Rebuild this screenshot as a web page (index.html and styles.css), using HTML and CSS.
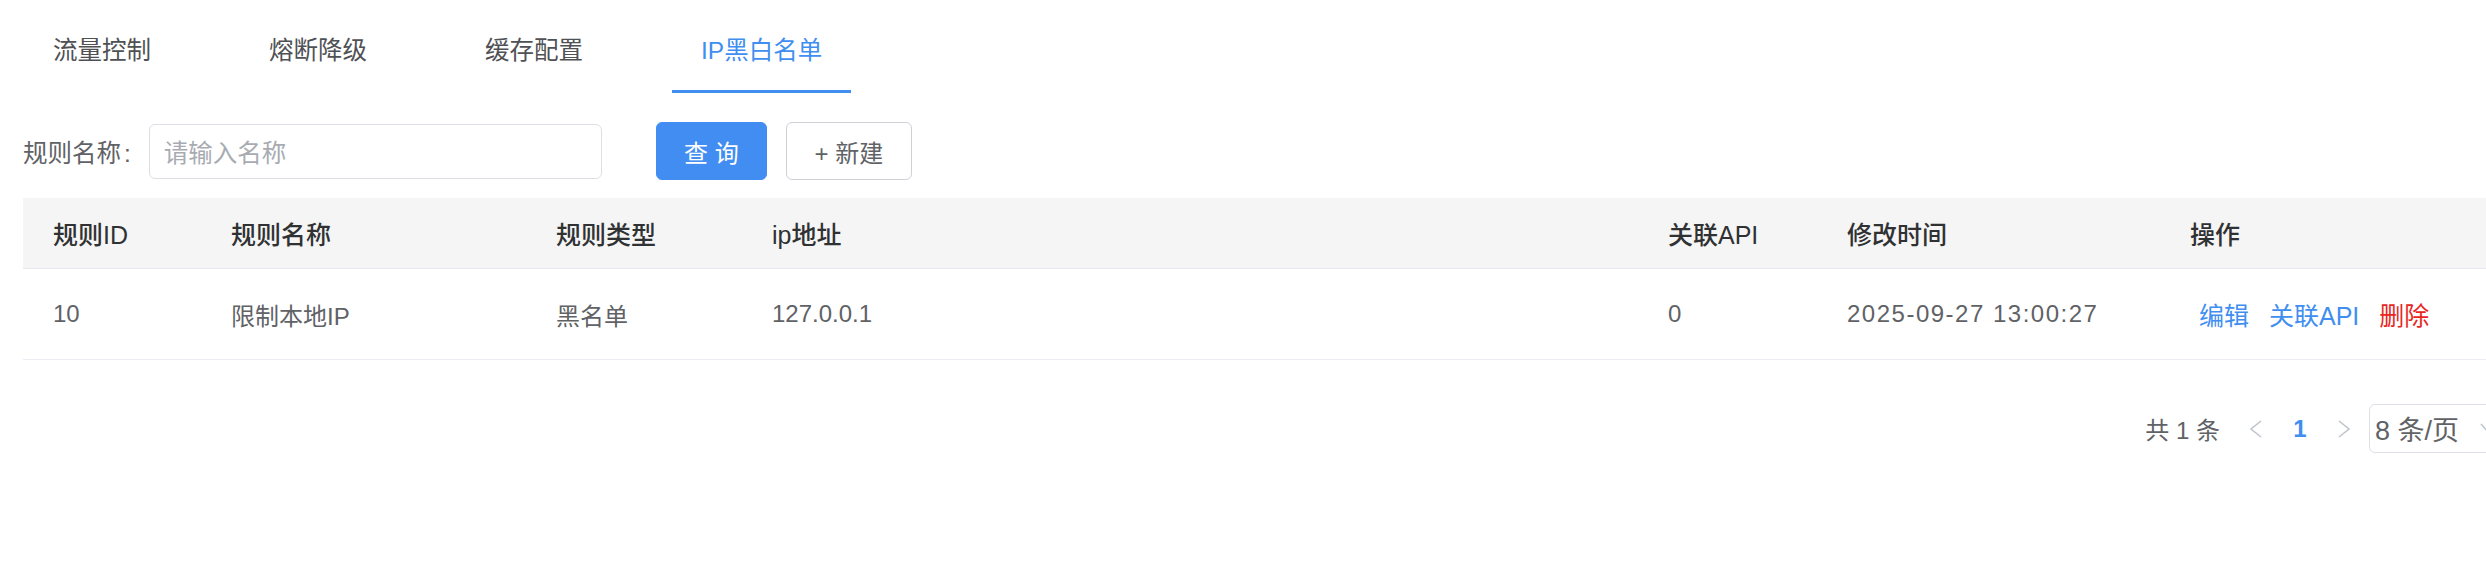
FILE: index.html
```html
<!DOCTYPE html>
<html lang="zh-CN">
<head>
<meta charset="utf-8">
<title>IP黑白名单</title>
<link rel="stylesheet" href="styles.css">
</head>
<body>
<div class="page">
  <nav class="tabs">
    <div class="tab">流量控制</div>
    <div class="tab">熔断降级</div>
    <div class="tab">缓存配置</div>
    <div class="tab active">IP黑白名单</div>
  </nav>

  <div class="search">
    <label class="search-label">规则名称<span class="colon">:</span></label>
    <div class="input"><span class="placeholder">请输入名称</span></div>
    <button class="btn btn-primary">查 询</button>
    <button class="btn btn-default">+ 新建</button>
  </div>

  <table class="grid">
    <colgroup>
      <col class="c1"><col class="c2"><col class="c3"><col class="c4"><col class="c5"><col class="c6"><col class="c7">
    </colgroup>
    <thead>
      <tr>
        <th>规则ID</th>
        <th>规则名称</th>
        <th>规则类型</th>
        <th>ip地址</th>
        <th>关联API</th>
        <th>修改时间</th>
        <th>操作</th>
      </tr>
    </thead>
    <tbody>
      <tr>
        <td>10</td>
        <td>限制本地IP</td>
        <td>黑名单</td>
        <td>127.0.0.1</td>
        <td>0</td>
        <td class="date">2025-09-27 13:00:27</td>
        <td class="ops"><a class="link">编辑</a><a class="link">关联API</a><a class="link danger">删除</a></td>
      </tr>
    </tbody>
  </table>

  <div class="pager">
    <span class="total">共 1 条</span>
    <span class="pg-btn disabled"><svg width="14" height="20" viewBox="0 0 14 20"><polyline points="12,2 2,10 12,18" fill="none" stroke="#c0c4cc" stroke-width="1.6"/></svg></span>
    <span class="pg-btn current">1</span>
    <span class="pg-btn disabled"><svg width="14" height="20" viewBox="0 0 14 20"><polyline points="2,2 12,10 2,18" fill="none" stroke="#c0c4cc" stroke-width="1.6"/></svg></span>
    <div class="size-select"><span>8 条/页</span><svg class="arrow" width="20" height="14" viewBox="0 0 20 14"><polyline points="2,2 10,11 18,2" fill="none" stroke="#c0c4cc" stroke-width="1.6"/></svg></div>
  </div>
</div>
</body>
</html>
```

FILE: styles.css
```css
html, body {
  margin: 0;
  padding: 0;
  background: #ffffff;
  overflow: hidden;
}

body {
  font-family: "Liberation Sans", "Noto Sans CJK SC", sans-serif;
  font-size: 24px;
  color: #606266;
}

.page {
  width: 2500px;
  margin-left: 23px;
}

.tabs {
  display: flex;
  gap: 60px;
  padding-left: 1px;
}

.tab {
  box-sizing: border-box;
  height: 93px;
  padding: 12px 29px 0;
  line-height: 78px;
  font-size: 24.5px;
  color: #4f5155;
  border-bottom: 3px solid transparent;
  white-space: nowrap;
}

.tab.active {
  color: #3f8ef0;
  border-bottom-color: #3f8ef0;
}

.search {
  display: flex;
  align-items: center;
  margin-top: 29px;
  height: 58px;
}

.search-label {
  color: #606266;
  font-size: 24.5px;
  margin-right: 18px;
  white-space: nowrap;
}

.colon {
  margin-left: 3px;
}

.input {
  box-sizing: border-box;
  width: 453px;
  height: 55px;
  border: 1.5px solid #dcdfe6;
  border-radius: 6px;
  padding-left: 14px;
  display: flex;
  align-items: center;
}

.placeholder {
  color: #a8abb2;
  font-size: 24.5px;
}

.btn {
  box-sizing: border-box;
  height: 58px;
  border-radius: 6px;
  font-family: inherit;
  font-size: 24px;
  padding: 0 26px;
  white-space: nowrap;
  cursor: pointer;
}

.btn-primary {
  margin-left: 54px;
  width: 111px;
  background: #418df1;
  border: 1px solid #418df1;
  color: #ffffff;
}

.btn-default {
  margin-left: 19px;
  width: 126px;
  background: #ffffff;
  border: 1.5px solid #cfd1d6;
  color: #606266;
}

.grid {
  margin-top: 18px;
  width: 2560px;
  border-collapse: collapse;
  table-layout: fixed;
}

.c1 { width: 178px; }
.c2 { width: 325px; }
.c3 { width: 216px; }
.c4 { width: 896px; }
.c5 { width: 179px; }
.c6 { width: 343px; }
.c7 { width: 423px; }

.grid th {
  height: 70px;
  padding: 0 0 0 30px;
  text-align: left;
  background: #f5f5f5;
  color: #303133;
  font-weight: 500;
  font-size: 25px;
  border-bottom: 1.5px solid #e6e9f0;
}

.grid td {
  height: 90px;
  padding: 0 0 0 30px;
  color: #606266;
  font-size: 24px;
  border-bottom: 1.5px solid #ebeef5;
  white-space: nowrap;
}

.grid td.date {
  letter-spacing: 1.5px;
}

.grid td.ops {
  padding-left: 28px;
}

.link {
  padding: 0 10px;
  color: #3f8ef0;
  font-size: 25px;
  cursor: pointer;
}

.link:first-child {
  padding-left: 11px;
}

.link.danger {
  color: #e8261e;
}

.pager {
  display: flex;
  align-items: center;
  justify-content: flex-end;
  margin-top: 44px;
  height: 49px;
}

.total {
  color: #606266;
  font-size: 24px;
  margin-right: 14px;
}

.pg-btn {
  width: 44px;
  height: 49px;
  display: flex;
  align-items: center;
  justify-content: center;
  font-size: 24px;
}

.pg-btn.current {
  color: #3f8ef0;
  font-weight: 600;
}

.size-select {
  box-sizing: border-box;
  margin-left: 3px;
  width: 154px;
  height: 49px;
  border: 1.5px solid #dcdfe6;
  border-radius: 6px;
  padding-left: 5px;
  display: flex;
  align-items: center;
  gap: 20px;
  color: #606266;
  font-size: 27px;
}

.size-select .arrow {
  flex: none;
}
```
